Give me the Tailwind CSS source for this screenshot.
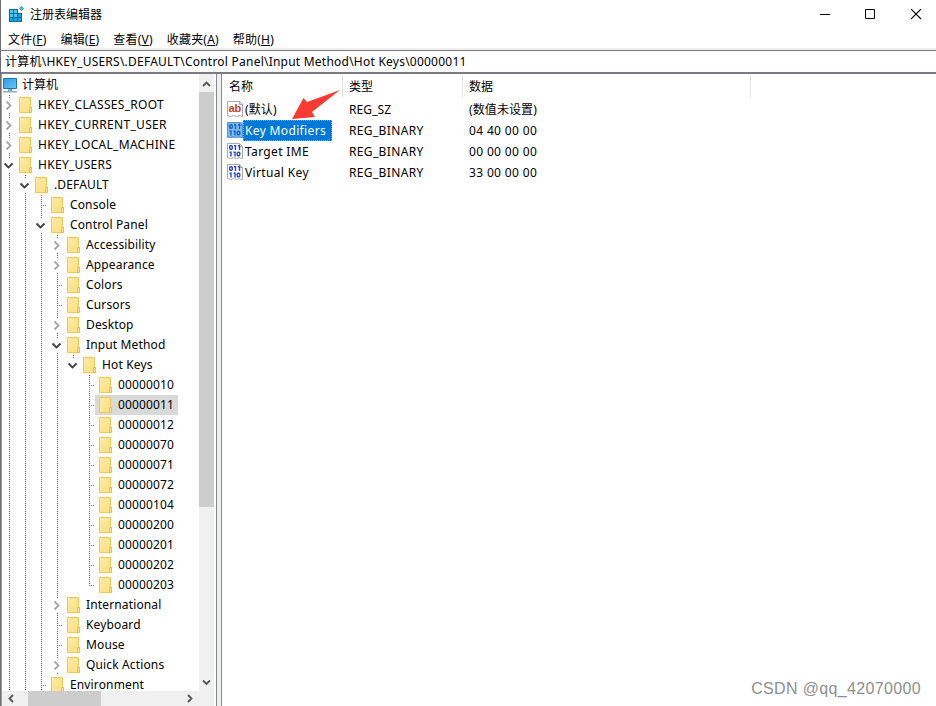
<!DOCTYPE html>
<html lang="zh-CN">
<head>
    <meta charset="UTF-8">
    <meta name="viewport" content="width=device-width, initial-scale=1.0">
    <title>注册表编辑器</title>
    <script src="https://cdn.jsdelivr.net/npm/@tailwindcss/browser@4"></script>
</head>
<body class="relative flex flex-col w-[936px] h-[706px] overflow-hidden bg-white border-l border-[#6e6e72] text-black text-[12px] leading-5 tracking-[0.14px] font-['Noto_Sans','Noto_Sans_CJK_SC',sans-serif]">
    <!-- Shared icons -->
    <svg class="absolute h-0 w-0">
        <defs>
            <linearGradient id="folder-fill" x1="0" y1="0" x2="1" y2="1">
                <stop offset="0" stop-color="#ffeaa6"/>
                <stop offset="1" stop-color="#fddf80"/>
            </linearGradient>
            <linearGradient id="screen-fill" x1="0" y1="0" x2="1" y2="1">
                <stop offset="0" stop-color="#2c9be8"/>
                <stop offset="1" stop-color="#6cc7fa"/>
            </linearGradient>
            <symbol id="folder" viewBox="0 0 13 16">
                <path d="M.5.5h11v10h1v5H.5z" fill="url(#folder-fill)" stroke="#edc951"/>
                <path d="M10.500 15v-4.500h2v5h-2z" fill="#ffe591" stroke="#e8c143"/>
            </symbol>
            <symbol id="page" viewBox="0 0 16 16">
                <path d="M.5.5h12l3 3v12h-1l-2-1-3 1-3-1-3 1-3-1z" fill="#fff" stroke="#a8a8a8"/>
                <path d="M12.500.5v3h3" fill="none" stroke="#a8a8a8"/>
            </symbol>
        </defs>
    </svg>

    <header class="flex h-[29px] items-center pl-[7px]">
        <svg class="mr-1.5 h-4 w-4" viewBox="0 0 16 16">
            <path d="M1 3h9v4h4v9H1z" fill="#0b6c9f"/>
            <path d="M2 4h3v3H2zM6 4h3v3H6zM2 8h3v3H2zM6 8h3v3H6z" fill="#4ec7f5"/>
            <path d="M10 8h3v3h-3zM2 12h3v3H2zM6 12h3v3H6zM10 12h3v3h-3z" fill="#17a4dc"/>
            <path d="M13.500 0l2.500 2.500L13.500 5 11 2.500z" fill="#2599c9"/>
            <path d="M13.500 1.300l1.200 1.200-1.200 1.200-1.200-1.200z" fill="#5ccdf7"/>
        </svg>
        <h1 class="grow pt-0.5 tracking-normal">注册表编辑器</h1>
        <svg class="mr-[34px] h-[11px] w-[11px]" viewBox="0 0 11 11"><path d="M0 5.500h10" stroke="#000"/></svg>
        <svg class="mr-[35px] h-[11px] w-[11px]" viewBox="0 0 11 11"><path d="M.5.500h9v9h-9z" fill="none" stroke="#000"/></svg>
        <svg class="mr-[14px] h-[11px] w-[11px]" viewBox="0 0 11 11"><path d="M0 0l10 10M10 0L0 10" stroke="#000" stroke-width="1.100"/></svg>
    </header>

    <nav class="flex h-[19px] items-center gap-[14px] pl-[7px] pt-[3px] tracking-[0.2px]">
        <span>文件(<u>F</u>)</span>
        <span>编辑(<u>E</u>)</span>
        <span>查看(<u>V</u>)</span>
        <span>收藏夹(<u>A</u>)</span>
        <span>帮助(<u>H</u>)</span>
    </nav>

    <div class="mt-0.5 h-6 border-t border-b-2 border-[#7a7a7f] pl-1 leading-[22px] tracking-[0.23px] shadow-[0_-2px_0_#f0f0f0]">计算机\HKEY_USERS\.DEFAULT\Control Panel\Input Method\Hot Keys\00000011</div>

    <main class="flex min-h-0 grow">
        <!-- Key tree -->
        <aside class="flex w-[216px] flex-col border-l border-r border-l-[#a0a0a4] border-r-[#828790] pr-0.5">
            <div class="flex min-h-0 grow">
                <div id="tree" class="min-w-0 grow overflow-hidden pt-px">
                    <div class="flex h-5 items-center">
                        <svg class="mr-[5px] h-4 w-[15px]" viewBox="0 0 15 16">
                            <path d="M1.500 1.500h13v10h-13z" fill="url(#screen-fill)" stroke="#1878b5"/>
                            <path d="M6 12h4v2H6zM1 14h14v1.500H1z" fill="#8facc0"/>
                        </svg>
                        <span class="tracking-normal">计算机</span>
                    </div>
                </div>
                <div class="flex w-[15px] flex-col items-center bg-[#f0f0f0]">
                    <svg class="h-[18px] w-[9px] shrink-0" viewBox="0 0 9 18"><path d="M1 12l3.500-3.500L8 12" fill="none" stroke="#555" stroke-width="1.800"/></svg>
                    <div class="h-[415px] w-full bg-[#cdcdcd]"></div>
                    <svg class="mt-auto h-[18px] w-[9px] shrink-0" viewBox="0 0 9 18"><path d="M1 7.500L4.500 11 8 7.500" fill="none" stroke="#555" stroke-width="1.800"/></svg>
                </div>
            </div>
            <div class="flex h-[15px] items-center bg-[#f0f0f0]">
                <svg class="ml-[5px] mr-[12px] h-[9px] w-[9px]" viewBox="0 0 9 9"><path d="M6 1L2.500 4.500 6 8" fill="none" stroke="#555" stroke-width="1.800"/></svg>
                <div class="h-full w-[73px] bg-[#cdcdcd]"></div>
                <svg class="ml-[84px] h-[9px] w-[9px]" viewBox="0 0 9 9"><path d="M3 1l3.500 3.500L3 8" fill="none" stroke="#555" stroke-width="1.800"/></svg>
            </div>
        </aside>
        <div class="w-1 bg-[#f0f0f0]"></div>

        <!-- Values -->
        <section class="grow border-l border-[#828790]">
            <div class="flex h-[25px] pt-px leading-6 tracking-normal">
                <div class="mb-px w-[121px] border-r border-[#e5e5e5] pl-[7px]">名称</div>
                <div class="mb-px w-[120px] border-r border-[#e5e5e5] pl-[6px]">类型</div>
                <div class="mb-px w-[288px] border-r border-[#e5e5e5] pl-[6px]">数据</div>
            </div>
            <div id="values"></div>
        </section>
    </main>

    <!-- Arrow pointing at the selected value -->
    <svg class="absolute left-[290px] top-[88px] h-8 w-[52px]" viewBox="0 0 52 32">
        <path d="M49 2L16 14 12.500 10 1 31l23-2-3-5z" fill="#f93b34"/>
    </svg>
    <div class="absolute right-[15px] bottom-[7px] font-['Liberation_Sans',sans-serif] text-[16px] leading-5 tracking-[0.350px] text-[#8f8f8f]">CSDN @qq_42070000</div>

    <script>
        // guides: "|" line, " " nothing; kind: + collapsed, - expanded, o only child, t leaf, l last leaf
        const keys = [
            ['', '+', 'HKEY_CLASSES_ROOT'],
            ['', '+', 'HKEY_CURRENT_USER'],
            ['', '+', 'HKEY_LOCAL_MACHINE'],
            ['', '-', 'HKEY_USERS'],
            ['|', '-', '.DEFAULT'],
            ['||', 't', 'Console'],
            ['||', '-', 'Control Panel'],
            ['|||', '+', 'Accessibility'],
            ['|||', '+', 'Appearance'],
            ['|||', 't', 'Colors'],
            ['|||', 't', 'Cursors'],
            ['|||', '+', 'Desktop'],
            ['|||', '-', 'Input Method'],
            ['||||', 'o', 'Hot Keys'],
            ['|||| ', 't', '00000010'],
            ['|||| ', 't', '00000011'],
            ['|||| ', 't', '00000012'],
            ['|||| ', 't', '00000070'],
            ['|||| ', 't', '00000071'],
            ['|||| ', 't', '00000072'],
            ['|||| ', 't', '00000104'],
            ['|||| ', 't', '00000200'],
            ['|||| ', 't', '00000201'],
            ['|||| ', 't', '00000202'],
            ['|||| ', 'l', '00000203'],
            ['|||', '+', 'International'],
            ['|||', 't', 'Keyboard'],
            ['|||', 't', 'Mouse'],
            ['|||', '+', 'Quick Actions'],
            ['||', 't', 'Environment']
        ];

        const dots = d => `<path d="${d}" fill="none" stroke="#6b6b6b" stroke-dasharray="1 1"/>`;
        const right = '<path d="M4.500 6.500l4 4-4 4" fill="none" stroke="#a6a6a6" stroke-width="1.800"/>';
        const down = '<path d="M2.500 8.500l4 4 4-4" fill="none" stroke="#404040" stroke-width="1.800"/>';
        const marks = {
            '|': dots('M7.5 0v20'),
            ' ': '',
            't': dots('M7.5 0v20') + dots('M9 10.5h5'),
            'l': dots('M7.5 0v10') + dots('M7 10.5h7'),
            '+': dots('M7.5 0v4') + dots('M7.5 18v2') + right,
            '-': dots('M7.5 0v4') + dots('M7.5 18v2') + down,
            'o': dots('M7.5 0v4') + down
        };

        document.getElementById('tree').innerHTML += keys.map(([guides, kind, label]) => `
            <div class="flex h-5 whitespace-nowrap">
                ${[...guides].map(g => `<svg class="h-5 w-4 shrink-0" viewBox="0 0 16 20">${marks[g]}</svg>`).join('')}
                <svg class="h-5 w-[13px] shrink-0" viewBox="0 0 13 20">${marks[kind]}</svg>
                <div class="flex h-5 items-center pl-1 pr-1 ${label === '00000011' ? 'bg-[#d9d9d9]' : ''}">
                    <svg class="mr-1.5 h-4 w-[13px] shrink-0"><use href="#folder"/></svg>
                    <span class="${label.startsWith('HKEY') ? 'tracking-[0.3px]' : ''}">${label}</span>
                </div>
            </div>`).join('');

        const values = [
            ['(默认)', 'REG_SZ', '(数值未设置)'],
            ['Key Modifiers', 'REG_BINARY', '04 40 00 00'],
            ['Target IME', 'REG_BINARY', '00 00 00 00'],
            ['Virtual Key', 'REG_BINARY', '33 00 00 00']
        ];
        const stringIcon = '<text x="1.500" y="10.500" font-family="Liberation Sans" font-size="11" font-weight="bold" letter-spacing="0" fill="#c8401f">ab</text>';
        // rings and bars, two rows
        const binaryIcon = `<g fill="none" stroke="#2447d8" stroke-width="1.400">
            <rect x="2.700" y="2.700" width="2.600" height="3.600" rx="1"/>
            <path d="M7 2.700h1.500V7M11 2.700h1.500V7M2.500 9.200H4v4.300M6.500 9.200H8v4.300"/>
            <rect x="10.200" y="9.200" width="2.600" height="3.600" rx="1"/>
        </g>`;

        document.getElementById('values').innerHTML = values.map(([name, type, data], i) => `
            <div class="flex h-[21px] items-center ${i === 0 ? 'tracking-[0.1px]' : 'tracking-[0.35px]'}">
                <div class="flex w-[121px] items-center pl-[5px]">
                    <svg class="h-4 w-4"><use href="#page"/>${i === 0 ? stringIcon : binaryIcon}${i === 1 ? '<path d="M0 0h16v16H0z" fill="#0078d7" opacity=".5"/>' : ''}</svg>
                    <span class="${i === 1 ? 'h-[21px] border border-dotted border-[#ff8728] bg-[#0078d7] pl-px pr-[5px] text-white' : 'pl-0.5 pt-0.5'}">${name}</span>
                </div>
                <div class="w-[120px] pl-[6px] pt-0.5">${type}</div>
                <div class="pl-[6px] pt-0.5">${data}</div>
            </div>`).join('');
    </script>
</body>
</html>
